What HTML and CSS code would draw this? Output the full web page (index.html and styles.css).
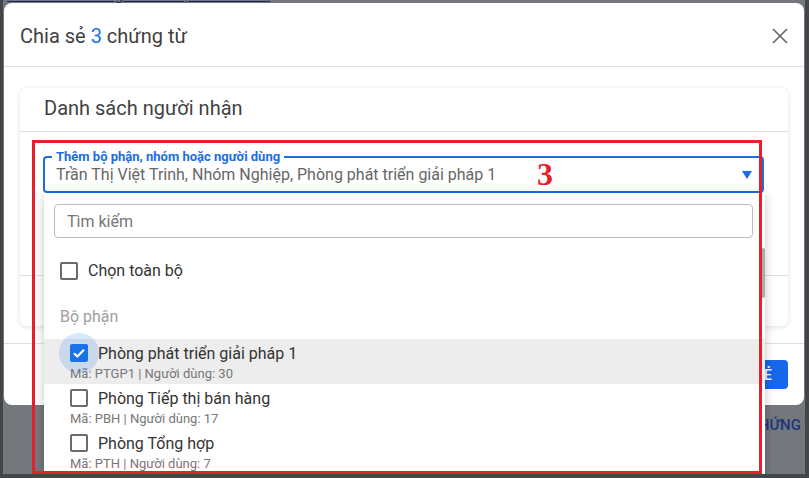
FILE: index.html
```html
<!DOCTYPE html>
<html lang="vi">
<head>
<meta charset="utf-8">
<title>Chia sẻ chứng từ</title>
<link rel="stylesheet" href="styles.css">
</head>
<body>
<div class="screen">
  <div class="page">
    <div class="page-top">Danh sách chứng từ đã chọn để chia sẻ</div>
    <div class="page-body">
      <div class="page-col">
        <div class="page-line">Mã chứng từ</div>
        <div class="page-line">Loại chứng từ</div>
        <div class="page-line">Bộ phận</div>
      </div>
      <div class="page-link">CHỨNG TỪ</div>
    </div>
  </div>
  <div class="backdrop"></div>

  <div class="dialog">
    <div class="dlg-head">
      <h2 class="dlg-title">Chia sẻ <span class="accent">3</span> chứng từ</h2>
      <button class="close" type="button" aria-label="Đóng">
        <svg viewBox="0 0 16 16" width="16" height="16"><path d="M1 1L15 15M15 1L1 15"/></svg>
      </button>
    </div>
    <div class="dlg-body">
      <div class="card">
        <div class="card-head">Danh sách người nhận</div>
        <div class="card-body">
          <div class="field">
            <span class="field-label">Thêm bộ phận, nhóm hoặc người dùng</span>
            <span class="field-value">Trần Thị Việt Trinh, Nhóm Nghiệp, Phòng phát triển giải pháp 1</span>
            <svg class="caret" viewBox="0 0 10 8" width="10" height="8"><path d="M0 0H10L5 8Z"/></svg>
            <div class="menu">
              <input class="search" type="text" placeholder="Tìm kiếm">
              <div class="opt-all">
                <span class="cb"></span>
                <span class="opt-text">Chọn toàn bộ</span>
              </div>
              <div class="group">Bộ phận</div>
              <div class="row selected">
                <div class="row-main">
                  <span class="cb checked">
                    <svg viewBox="0 0 18 18" width="18" height="18"><path d="M4 9.2l3.3 3.3L14 5.8"/></svg>
                  </span>
                  <span class="opt-text">Phòng phát triển giải pháp 1</span>
                </div>
                <div class="row-sub">Mã: PTGP1 | Người dùng: 30</div>
              </div>
              <div class="row">
                <div class="row-main">
                  <span class="cb"></span>
                  <span class="opt-text">Phòng Tiếp thị bán hàng</span>
                </div>
                <div class="row-sub">Mã: PBH | Người dùng: 17</div>
              </div>
              <div class="row">
                <div class="row-main">
                  <span class="cb"></span>
                  <span class="opt-text">Phòng Tổng hợp</span>
                </div>
                <div class="row-sub">Mã: PTH | Người dùng: 7</div>
              </div>
              <div class="scroll-thumb"></div>
            </div>
          </div>
        </div>
        <div class="card-foot"></div>
      </div>
    </div>
    <div class="dlg-foot">
      <button class="btn-primary" type="button">CHIA SẺ</button>
    </div>
  </div>

  <div class="annot-box"></div>
  <div class="annot-num">3</div>
</div>
</body>
</html>
```

FILE: styles.css
```css
* { box-sizing: border-box; }

html, body {
  margin: 0;
  padding: 0;
}

body {
  background: #434548;
  width: 809px;
  height: 478px;
  overflow: hidden;
  font-family: Roboto, "Noto Sans", Arial, sans-serif;
}

.screen {
  position: relative;
  margin-left: 3px;
  width: 802px;
  height: 474px;
  overflow: hidden;
  background: #e9eef8;
}

/* underlying page */
.page {
  padding-left: 31px;
  color: #222;
}

.page-top {
  margin: -12px 0 0 -27px;
  height: 15px;
  line-height: 15px;
  font-size: 15px;
  color: #2a56c6;
  text-decoration: underline;
  white-space: nowrap;
}

.page-body {
  display: flex;
  margin-top: 405px;
}

.page-col {
  width: 14px;
  overflow: hidden;
  white-space: nowrap;
}

.page-line {
  height: 20px;
  line-height: 20px;
  font-size: 15px;
}

.page-link {
  margin-left: 715px;
  margin-top: 7px;
  line-height: 20px;
  font-size: 15px;
  font-weight: 500;
  color: #3a6ef2;
  white-space: nowrap;
}

.backdrop {
  position: absolute;
  inset: 0;
  background: rgba(0, 0, 0, 0.5);
}

/* dialog */
.dialog {
  position: absolute;
  left: 1px;
  top: 3px;
  width: 800px;
  height: 402px;
  background: #fff;
  border-radius: 8px;
  display: flex;
  flex-direction: column;
  z-index: 1;
}

.dlg-head {
  height: 64px;
  border-bottom: 1px solid #e0e0e0;
  padding: 2px 16px 0;
  display: flex;
  align-items: center;
  justify-content: space-between;
}

.dlg-title {
  margin: 0;
  font-size: 20px;
  font-weight: 400;
  color: #3f3f3f;
}

.accent { color: #1a73e8; }

.close {
  border: 0;
  background: none;
  padding: 0;
  width: 16px;
  height: 16px;
  display: flex;
}

.close svg path {
  stroke: #6a6a6a;
  stroke-width: 1.7;
  fill: none;
}

.dlg-body {
  padding: 21px 16px 17px;
}

.card {
  height: 238px;
  border-radius: 6px;
  box-shadow: 0 1px 5px rgba(0, 0, 0, 0.13);
  display: flex;
  flex-direction: column;
  background: #fff;
}

.card-head {
  height: 44px;
  border-bottom: 1px solid #e0e0e0;
  padding: 0 24px 3px;
  display: flex;
  align-items: center;
  font-size: 20px;
  color: #424242;
}

.card-body {
  height: 143px;
  padding: 24px 24px 0 23px;
}

.card-foot {
  flex: 1;
  border-top: 1px solid #e0e0e0;
}

.field {
  position: relative;
  height: 37px;
  border: 2px solid #1a6de6;
  border-radius: 4px;
  padding: 0 10px 0 11px;
  display: flex;
  align-items: center;
  z-index: 2;
}

.field-label {
  position: absolute;
  top: -9px;
  left: 7px;
  padding: 0 4px;
  background: #fff;
  font-size: 13px;
  line-height: 16px;
  font-weight: 700;
  color: #1a6de6;
  white-space: nowrap;
}

.field-value {
  flex: 1;
  font-size: 16px;
  color: #666;
  white-space: nowrap;
}

.caret path { fill: #1a6de6; }

/* dropdown */
.menu {
  position: absolute;
  top: calc(100% + 2px);
  left: -1px;
  width: 721px;
  height: 300px;
  background: #fff;
  box-shadow: 0 3px 10px rgba(0, 0, 0, 0.22);
  padding-top: 11px;
}

.search {
  display: block;
  margin: 0 12px 0 10px;
  width: 699px;
  height: 34px;
  border: 1px solid #bdbdbd;
  border-radius: 4px;
  padding: 0 12px;
  font-family: Roboto, "Noto Sans", Arial, sans-serif;
  font-size: 16px;
  color: #333;
  outline: none;
}

.search::placeholder { color: #757575; }

.opt-all {
  margin-top: 10px;
  height: 45px;
  padding-left: 16px;
  display: flex;
  align-items: center;
  gap: 10px;
}

.opt-text {
  font-size: 16px;
  color: #333;
  white-space: nowrap;
}

.cb {
  position: relative;
  flex: none;
  width: 18px;
  height: 18px;
  border: 2px solid #6b6b6b;
  border-radius: 2px;
}

.cb.checked {
  border: 0;
  background: #1a73e8;
}

.cb.checked::before {
  content: "";
  position: absolute;
  left: -11px;
  top: -11px;
  width: 40px;
  height: 40px;
  border-radius: 50%;
  background: rgba(25, 110, 220, 0.17);
}

.cb.checked svg {
  position: relative;
  display: block;
}

.cb.checked svg path {
  stroke: #fff;
  stroke-width: 2.2;
  fill: none;
}

.group {
  height: 46px;
  padding-left: 16px;
  display: flex;
  align-items: center;
  font-size: 16px;
  color: #9e9e9e;
}

.row {
  height: 45px;
  padding: 4px 0 2px 26px;
}

.row.selected { background: #ededed; }

.row-main {
  height: 20px;
  display: flex;
  align-items: center;
  gap: 10px;
}

.row-sub {
  margin-top: 3px;
  height: 16px;
  line-height: 16px;
  font-size: 13px;
  color: #777;
  white-space: nowrap;
}

.scroll-thumb {
  position: absolute;
  right: 0;
  top: 55px;
  width: 4px;
  height: 50px;
  border-radius: 2px;
  background: #ababab;
}

.dlg-foot {
  border-top: 1px solid #e0e0e0;
  padding: 16px;
  display: flex;
  justify-content: flex-end;
}

.btn-primary {
  height: 29px;
  padding: 0 16px;
  border: 0;
  border-radius: 4px;
  background: #1668e8;
  color: #fff;
  font-family: Roboto, "Noto Sans", Arial, sans-serif;
  font-size: 14px;
  font-weight: 500;
}

/* annotation overlay */
.annot-box {
  position: absolute;
  left: 29px;
  top: 140px;
  width: 730px;
  height: 334px;
  border: 3px solid #e61f2b;
  pointer-events: none;
  z-index: 5;
}

.annot-num {
  position: absolute;
  left: 534px;
  top: 158px;
  font-family: "Liberation Serif", "Times New Roman", serif;
  font-weight: 700;
  font-size: 32px;
  line-height: 32px;
  color: #e61f2b;
  z-index: 5;
}
```
